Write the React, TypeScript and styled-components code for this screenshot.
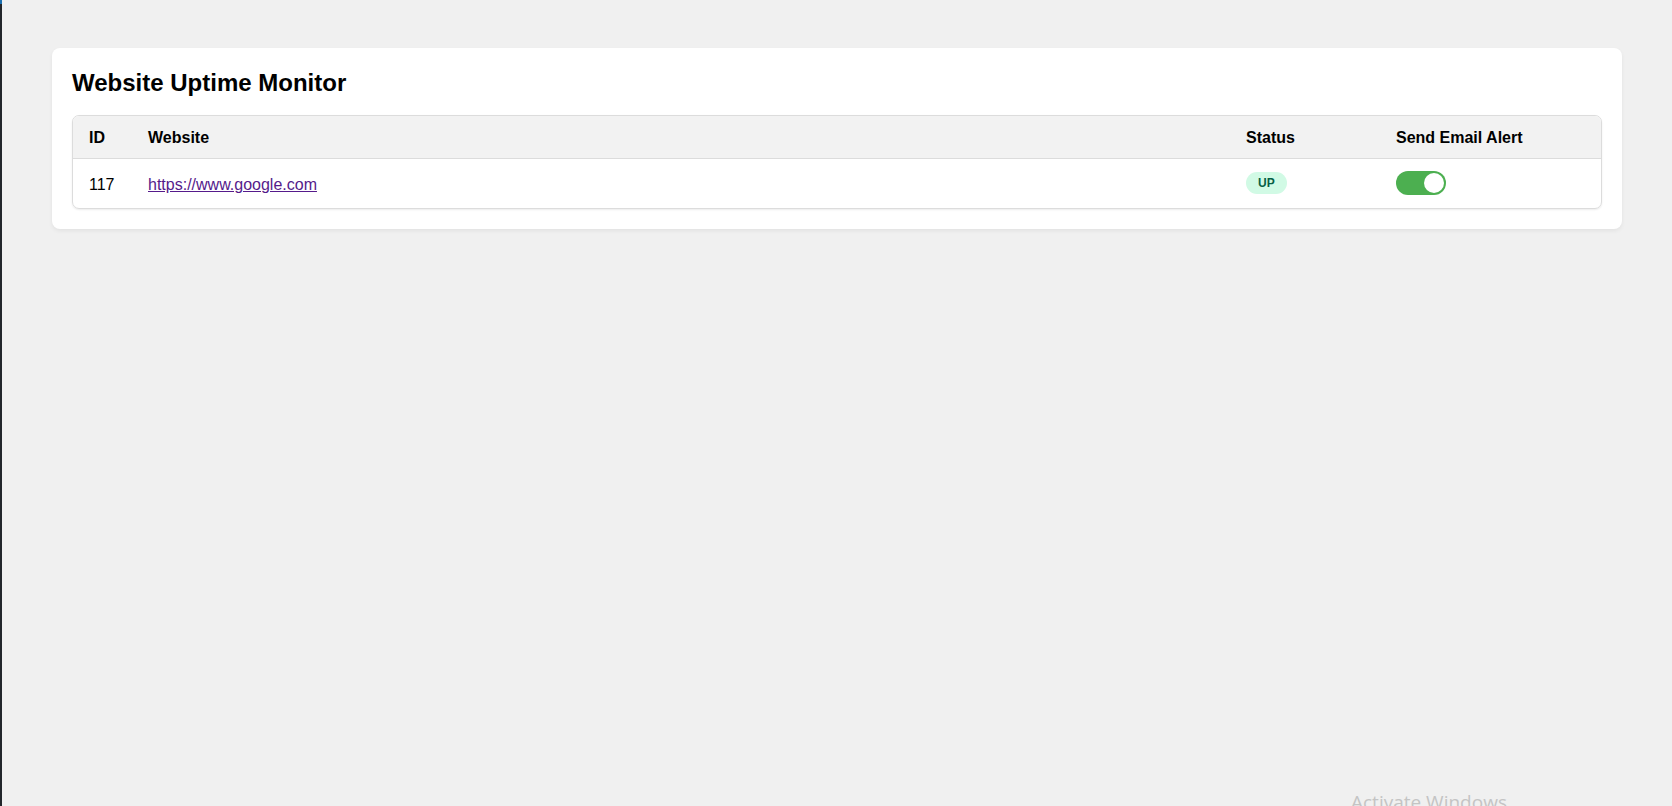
import React from "react";
import styled, { createGlobalStyle } from "styled-components";

const GlobalStyle = createGlobalStyle`
  html, body {
    margin: 0;
    padding: 0;
    background: #f0f0f0;
    font-family: "Liberation Sans", Arial, sans-serif;
    color: #000;
  }
  * { box-sizing: border-box; }
`;

const Frame = styled.div`
  display: flex;
  min-height: 100vh;
  height: 806px;
  overflow: hidden;
  position: relative;
`;

const EdgeBar = styled.div`
  width: 2px;
  flex: none;
  background: linear-gradient(#1b6fb0 0, #1b6fb0 4px, #22262b 4px);
`;

const Main = styled.main`
  flex: 1;
  padding: 48px 50px;
`;

const Card = styled.section`
  background: #fff;
  border-radius: 8px;
  padding: 21px 20px 20px;
  box-shadow: 0 2px 4px rgba(0, 0, 0, 0.06);
`;

const Title = styled.h2`
  margin: 0 0 18px;
  font-size: 24px;
  font-weight: 700;
  line-height: 28px;
`;

const TableWrap = styled.div`
  border: 1px solid #dcdcdc;
  border-radius: 7px;
  overflow: hidden;
  box-shadow: 0 1px 2px rgba(0, 0, 0, 0.08);
`;

const Table = styled.table`
  width: 100%;
  border-collapse: collapse;
  table-layout: fixed;
  font-size: 16px;
`;

const HeadCell = styled.th`
  background: #f2f2f2;
  text-align: left;
  font-weight: 700;
  padding: 13px 16px 11px;
  line-height: 18px;
  border-bottom: 1px solid #dcdcdc;
`;

const Cell = styled.td`
  padding: 12px 16px;
  line-height: 18px;
  vertical-align: middle;
  height: 49px;
`;

const CellText = styled.span`
  position: relative;
  top: 2px;
`;

const SiteLink = styled.a`
  color: #551a8b;
  text-decoration: underline;
`;

const Badge = styled.span<{ $up: boolean }>`
  display: inline-block;
  padding: 4px 12px;
  border-radius: 12px;
  font-size: 12px;
  font-weight: 700;
  line-height: 14px;
  background: ${(p) => (p.$up ? "#d1fae5" : "#fee2e2")};
  color: ${(p) => (p.$up ? "#065f46" : "#991b1b")};
  vertical-align: middle;
`;

const Switch = styled.span<{ $on: boolean }>`
  display: inline-block;
  position: relative;
  width: 50px;
  height: 24px;
  border-radius: 12px;
  background: ${(p) => (p.$on ? "#4caf50" : "#ccc")};
  vertical-align: middle;
  cursor: pointer;
`;

const Knob = styled.span<{ $on: boolean }>`
  position: absolute;
  top: 2px;
  left: ${(p) => (p.$on ? "28px" : "2px")};
  width: 20px;
  height: 20px;
  border-radius: 50%;
  background: #fff;
`;

const Watermark = styled.div`
  position: absolute;
  left: 1351px;
  top: 789px;
  font-family: "Open Sans", "Noto Sans", sans-serif;
  font-size: 19px;
  color: #c4c4c4;
  white-space: nowrap;
  pointer-events: none;
`;

const rows = [{ id: 117, url: "https://www.google.com", up: true, alert: true }];

export default function App() {
  return (
    <>
      <GlobalStyle />
      <Frame>
        <EdgeBar />
        <Main>
          <Card>
            <Title>Website Uptime Monitor</Title>
            <TableWrap>
              <Table>
                <colgroup>
                  <col style={{ width: 59 }} />
                  <col />
                  <col style={{ width: 150 }} />
                  <col style={{ width: 221 }} />
                </colgroup>
                <thead>
                  <tr>
                    <HeadCell>ID</HeadCell>
                    <HeadCell>Website</HeadCell>
                    <HeadCell>Status</HeadCell>
                    <HeadCell>Send Email Alert</HeadCell>
                  </tr>
                </thead>
                <tbody>
                  {rows.map((r) => (
                    <tr key={r.id}>
                      <Cell>
                        <CellText>{r.id}</CellText>
                      </Cell>
                      <Cell>
                        <CellText>
                          <SiteLink href={r.url}>{r.url}</SiteLink>
                        </CellText>
                      </Cell>
                      <Cell>
                        <Badge $up={r.up}>{r.up ? "UP" : "DOWN"}</Badge>
                      </Cell>
                      <Cell>
                        <Switch $on={r.alert}>
                          <Knob $on={r.alert} />
                        </Switch>
                      </Cell>
                    </tr>
                  ))}
                </tbody>
              </Table>
            </TableWrap>
          </Card>
        </Main>
        <Watermark>Activate Windows</Watermark>
      </Frame>
    </>
  );
}
